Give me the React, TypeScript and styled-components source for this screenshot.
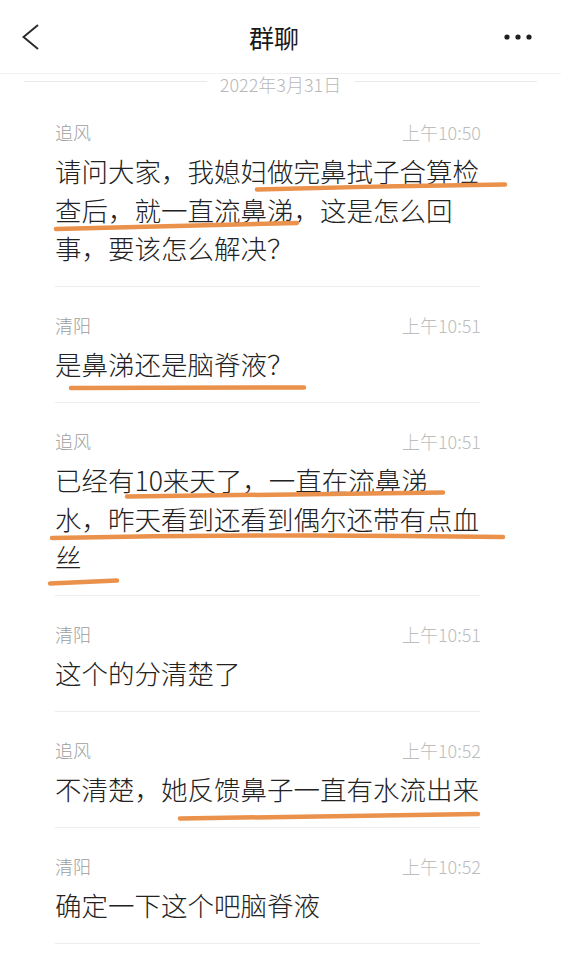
import React from "react";
import styled, { createGlobalStyle } from "styled-components";

const GlobalStyle = createGlobalStyle`
  html, body {
    margin: 0;
    padding: 0;
    background: #ffffff;
  }
  body {
    font-family: "Noto Sans CJK SC", "Noto Sans", sans-serif;
    color: #1c1c1c;
  }
  * { box-sizing: border-box; }
`;

const Page = styled.div`
  position: relative;
  width: 561px;
  min-height: 960px;
  background: #fff;
  overflow: hidden;
`;

const Header = styled.header`
  height: 74px;
  display: grid;
  grid-template-columns: 1fr auto 1fr;
  align-items: center;
  padding: 0 29px 0 22px;
  border-bottom: 1px solid #f1f1f1;
`;

const IconButton = styled.button<{ $align: "start" | "end" }>`
  justify-self: ${(p) => p.$align};
  display: flex;
  align-items: center;
  background: none;
  border: 0;
  padding: 0;
  margin: 0;
  color: #2b2b2b;
`;

const Title = styled.h1`
  margin: 0 0 0 -6px;
  font-size: 25px;
  line-height: 30px;
  font-weight: 400;
  color: #1a1a1a;
`;

const DateRow = styled.div`
  height: 20px;
  display: flex;
  align-items: center;
  gap: 13px;
  padding: 0 24px;
`;

const DateLine = styled.span`
  flex: 1;
  height: 1px;
  background: #e9e9e9;
  margin-bottom: 5px;
`;

const DateText = styled.span`
  font-size: 18px;
  line-height: 20px;
  font-weight: 300;
  color: #b9b9b9;
`;

const List = styled.div`
  padding: 0 81px 0 55px;
`;

const Message = styled.div`
  padding: 26px 0 18.5px;
  border-bottom: 1px solid #ececec;
`;

const Meta = styled.div`
  display: flex;
  justify-content: space-between;
  align-items: center;
  height: 24px;
  margin-bottom: 8px;
  font-size: 18px;
  line-height: 24px;
  font-weight: 300;
`;

const Name = styled.span`
  color: #9e9e9e;
`;

const Time = styled.span`
  color: #bdbdbd;
  margin-right: -1px;
`;

const Body = styled.div`
  font-size: 26.5px;
  line-height: 38.5px;
  font-weight: 300;
  color: #222222;
  line-break: strict;
`;

const Marks = styled.svg`
  position: absolute;
  left: 0;
  top: 0;
  pointer-events: none;
`;

type Msg = { name: string; time: string; text: string };

const messages: Msg[] = [
  {
    name: "追风",
    time: "上午10:50",
    text: "请问大家，我媳妇做完鼻拭子合算检查后，就一直流鼻涕，这是怎么回事，要该怎么解决？",
  },
  { name: "清阳", time: "上午10:51", text: "是鼻涕还是脑脊液？" },
  {
    name: "追风",
    time: "上午10:51",
    text: "已经有10来天了，一直在流鼻涕水，昨天看到还看到偶尔还带有点血丝",
  },
  { name: "清阳", time: "上午10:51", text: "这个的分清楚了" },
  { name: "追风", time: "上午10:52", text: "不清楚，她反馈鼻子一直有水流出来" },
  { name: "清阳", time: "上午10:52", text: "确定一下这个吧脑脊液" },
];

const underlines = [
  "M257 189.5 Q380 186 505 184.5",
  "M56 229 Q176 226.5 297 223",
  "M71 388 L304 387.5",
  "M127 496.5 Q285 494 443 492.5",
  "M52 538 Q280 533.5 503 537",
  "M50 583.5 L117 580.5",
  "M180 818.5 Q330 816 478 814",
];

export default function App() {
  return (
    <Page>
      <GlobalStyle />
      <Header>
        <IconButton $align="start" aria-label="返回">
          <svg width="18" height="26" viewBox="0 0 18 26">
            <polyline
              points="16,1 1.5,13 16,25"
              fill="none"
              stroke="currentColor"
              strokeWidth="2"
              strokeLinejoin="miter"
            />
          </svg>
        </IconButton>
        <Title>群聊</Title>
        <IconButton $align="end" aria-label="更多">
          <svg width="28" height="6" viewBox="0 0 28 6">
            <circle cx="3" cy="3" r="2.6" fill="#1f1f1f" />
            <circle cx="14" cy="3" r="2.6" fill="#1f1f1f" />
            <circle cx="25" cy="3" r="2.6" fill="#1f1f1f" />
          </svg>
        </IconButton>
      </Header>
      <DateRow>
        <DateLine />
        <DateText>2022年3月31日</DateText>
        <DateLine />
      </DateRow>
      <List>
        {messages.map((m, i) => (
          <Message key={i}>
            <Meta>
              <Name>{m.name}</Name>
              <Time>{m.time}</Time>
            </Meta>
            <Body>{m.text}</Body>
          </Message>
        ))}
      </List>
      <Marks width="561" height="960" viewBox="0 0 561 960">
        {underlines.map((d, i) => (
          <path
            key={i}
            d={d}
            fill="none"
            stroke="#ea914c"
            strokeWidth="4.5"
            strokeLinecap="round"
          />
        ))}
      </Marks>
    </Page>
  );
}
